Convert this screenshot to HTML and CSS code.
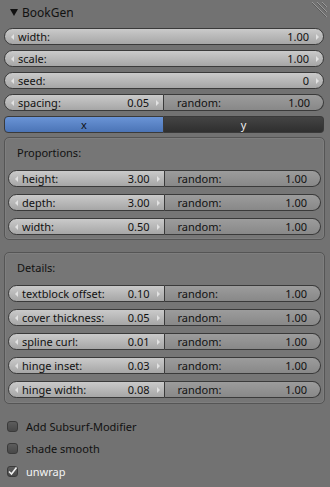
FILE: index.html
```html
<!DOCTYPE html>
<html lang="en">
<head>
    <meta charset="UTF-8">
    <meta name="viewport" content="width=device-width, initial-scale=1.0">
    <title>BookGen</title>
    <link rel="stylesheet" href="styles.css">
</head>
<body>
    <div class="panel">
        <div class="header">
            <span class="tri"></span>
            <span class="title">BookGen</span>
            <svg class="grip" width="18" height="18" viewBox="0 0 18 18">
                <path d="M2 1 L17 16 M7 1 L17 11 M12 1 L17 6" stroke="#9a9a9a" stroke-width="1"/>
                <path d="M2 2 L16 16 M7 2 L16 11 M12 2 L16 6" stroke="#5a5a5a" stroke-width="1"/>
            </svg>
        </div>

        <div class="rows">
            <div class="num full"><span class="al"></span><span class="lbl">width:</span><span class="val">1.00</span><span class="ar"></span></div>
            <div class="num full"><span class="al"></span><span class="lbl">scale:</span><span class="val">1.00</span><span class="ar"></span></div>
            <div class="num full"><span class="al"></span><span class="lbl">seed:</span><span class="val">0</span><span class="ar"></span></div>
            <div class="split">
                <div class="num left"><span class="al"></span><span class="lbl">spacing:</span><span class="val">0.05</span><span class="ar"></span></div>
                <div class="slider right"><span class="lbl">random:</span><span class="val">1.00</span></div>
            </div>
            <div class="split">
                <div class="tab on">x</div>
                <div class="tab off">y</div>
            </div>
        </div>

        <div class="box first">
            <div class="box-title">Proportions:</div>
            <div class="split">
                <div class="num left"><span class="al"></span><span class="lbl">height:</span><span class="val">3.00</span><span class="ar"></span></div>
                <div class="slider right"><span class="lbl">random:</span><span class="val">1.00</span></div>
            </div>
            <div class="split">
                <div class="num left"><span class="al"></span><span class="lbl">depth:</span><span class="val">3.00</span><span class="ar"></span></div>
                <div class="slider right"><span class="lbl">random:</span><span class="val">1.00</span></div>
            </div>
            <div class="split">
                <div class="num left"><span class="al"></span><span class="lbl">width:</span><span class="val">0.50</span><span class="ar"></span></div>
                <div class="slider right"><span class="lbl">random:</span><span class="val">1.00</span></div>
            </div>
        </div>

        <div class="box second">
            <div class="box-title">Details:</div>
            <div class="split">
                <div class="num left"><span class="al"></span><span class="lbl">textblock offset:</span><span class="val">0.10</span><span class="ar"></span></div>
                <div class="slider right"><span class="lbl">randon:</span><span class="val">1.00</span></div>
            </div>
            <div class="split">
                <div class="num left"><span class="al"></span><span class="lbl">cover thickness:</span><span class="val">0.05</span><span class="ar"></span></div>
                <div class="slider right"><span class="lbl">random:</span><span class="val">1.00</span></div>
            </div>
            <div class="split">
                <div class="num left"><span class="al"></span><span class="lbl">spline curl:</span><span class="val">0.01</span><span class="ar"></span></div>
                <div class="slider right"><span class="lbl">random:</span><span class="val">1.00</span></div>
            </div>
            <div class="split">
                <div class="num left"><span class="al"></span><span class="lbl">hinge inset:</span><span class="val">0.03</span><span class="ar"></span></div>
                <div class="slider right"><span class="lbl">random:</span><span class="val">1.00</span></div>
            </div>
            <div class="split">
                <div class="num left"><span class="al"></span><span class="lbl">hinge width:</span><span class="val">0.08</span><span class="ar"></span></div>
                <div class="slider right"><span class="lbl">random:</span><span class="val">1.00</span></div>
            </div>
        </div>

        <div class="checks">
            <label class="check"><span class="cb"></span>Add Subsurf-Modifier</label>
            <label class="check"><span class="cb"></span>shade smooth</label>
            <label class="check checked"><span class="cb">
                <svg width="11" height="11" viewBox="0 0 11 11"><path d="M2 5.5 L4.5 8 L9.5 1.5" fill="none" stroke="#f0f0f0" stroke-width="1.6"/></svg>
            </span>unwrap</label>
        </div>
    </div>
</body>
</html>
```

FILE: styles.css
```css
body {
    margin: 0;
    padding: 0;
    background: #727272;
    font-family: "Noto Sans", "DejaVu Sans", sans-serif;
    font-size: 11px;
    color: #111;
}
.panel {
    width: 330px;
    height: 487px;
    padding: 0 6px 0 4px;
    box-sizing: border-box;
    overflow: hidden;
}
.header {
    display: flex;
    align-items: center;
    height: 24px;
    padding-left: 6px;
}
.tri {
    width: 0;
    height: 0;
    border-left: 4px solid transparent;
    border-right: 4px solid transparent;
    border-top: 7px solid #111;
    margin-right: 4px;
}
.title {
    font-size: 12px;
    color: #111;
}
.grip {
    margin-left: auto;
    margin-right: -4px;
    margin-top: -4px;
}
.rows {
    display: flex;
    flex-direction: column;
    gap: 5px;
    margin-top: 4px;
}
.split {
    display: grid;
    grid-template-columns: 1fr 1fr;
}
.num, .slider, .tab {
    height: 17px;
    box-sizing: border-box;
    border: 1px solid #3a3a3a;
    display: flex;
    align-items: center;
    white-space: nowrap;
}
.num {
    background: linear-gradient(#cacaca, #a6a6a6);
    padding: 0 4px 0 6px;
}
.slider {
    background: linear-gradient(#9c9c9c, #888);
    padding: 0 13px 0 13px;
}
.full {
    border-radius: 9px;
}
.left {
    border-radius: 9px 0 0 9px;
}
.right {
    border-radius: 0 9px 9px 0;
    border-left: none;
}
.lbl {
    flex: 1;
}
.al, .ar {
    width: 0;
    height: 0;
    border-top: 3px solid transparent;
    border-bottom: 3px solid transparent;
}
.al {
    border-right: 3px solid #e2e2e2;
    margin-right: 4px;
}
.ar {
    border-left: 3px solid #e2e2e2;
    margin-left: 7px;
}
.tab {
    justify-content: center;
}
.tab.on {
    background: linear-gradient(#6a94d6, #4b74b6);
    border-radius: 4px 0 0 4px;
    color: #111;
}
.tab.off {
    background: linear-gradient(#444, #2f2f2f);
    border-radius: 0 4px 4px 0;
    border-left: none;
    color: #eee;
}
.box {
    border: 1px solid #555;
    border-radius: 5px;
    background: #767676;
    box-shadow: inset 0 0 0 1px #7e7e7e;
    padding: 0 3px 4px 3px;
    display: flex;
    flex-direction: column;
    gap: 7px;
    margin-right: -1px;
}
.box.first {
    margin-top: 4px;
}
.box.second {
    margin-top: 12px;
    padding-bottom: 5px;
}
.box-title {
    height: 24px;
    line-height: 30px;
    padding-left: 9px;
    margin-bottom: 1px;
}
.checks {
    display: flex;
    flex-direction: column;
    margin-top: 11px;
    padding-left: 3px;
}
.check {
    display: flex;
    align-items: center;
    height: 22.5px;
}
.cb {
    width: 11px;
    height: 11px;
    box-sizing: border-box;
    border: 1px solid #3a3a3a;
    border-radius: 3px;
    background: linear-gradient(#5c5c5c, #484848);
    margin-right: 8px;
    display: flex;
}
.cb svg {
    margin: -1px;
}
.checked {
    color: #f4f4f4;
}
```
